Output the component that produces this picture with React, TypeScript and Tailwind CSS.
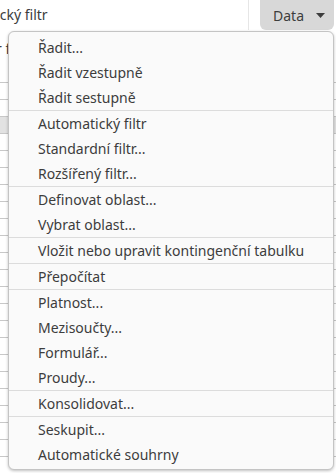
import { Fragment } from 'react'

const groups: string[][] = [
  ['Řadit...', 'Řadit vzestupně', 'Řadit sestupně'],
  ['Automatický filtr', 'Standardní filtr...', 'Rozšířený filtr...'],
  ['Definovat oblast...', 'Vybrat oblast...'],
  ['Vložit nebo upravit kontingenční tabulku'],
  ['Přepočítat'],
  ['Platnost...', 'Mezisoučty...', 'Formulář...', 'Proudy...'],
  ['Konsolidovat...'],
  ['Seskupit...', 'Automatické souhrny'],
]

export default function App() {
  return (
    <div
      className="relative w-[336px] h-[473px] overflow-hidden bg-white text-[#3d3d3d]"
      style={{ fontFamily: '"Noto Sans", "Open Sans", sans-serif' }}
    >
      {/* toolbar behind the menu */}
      <div className="flex h-[30px] items-stretch">
        <div className="flex-1 overflow-hidden whitespace-nowrap">
          <span className="block -ml-[61px] pt-[4px] text-[14px]">Automatický filtr</span>
        </div>
        <div className="w-px bg-[#e6e6e6] mr-[11px]" />
        <button className="mr-[2px] flex w-[74px] items-center rounded-b-[6px] bg-[#d8d8d8] pl-[13px] text-[14px] text-[#3d3d3d]">
          <span>Data</span>
          <svg className="ml-[12px]" width="9" height="5" viewBox="0 0 9 5">
            <path d="M0 0h9L4.5 5z" fill="#3d3d3d" />
          </svg>
        </button>
      </div>

      {/* sheet rows on the left */}
      <div className="flex h-[36px] items-center">
        <span className="-ml-[4px] text-[14px]">r f</span>
      </div>
      <div className="flex flex-col">
        {Array.from({ length: 24 }).map((_, i) => (
          <div
            key={i}
            className={`h-[17px] border-b border-[#c8c8c8] ${i === 3 ? 'bg-[#e2e2e2]' : ''}`}
          />
        ))}
      </div>

      {/* dropdown menu */}
      <div className="absolute left-[8px] top-[31px] w-[326px] rounded-[6px] border border-[#c4c4c4] bg-[#fafafa] pt-[3px] pb-[2px] shadow-[0_1px_3px_rgba(0,0,0,0.25)]">
        {groups.map((g, gi) => (
          <Fragment key={gi}>
            {gi > 0 && <div className="h-px bg-[#dcdcdc]" />}
            {g.map((label) => (
              <div key={label} className="flex h-[25px] items-center pl-[29px] text-[14px] text-[#3d3d3d]">
                {label}
              </div>
            ))}
          </Fragment>
        ))}
      </div>
    </div>
  )
}
